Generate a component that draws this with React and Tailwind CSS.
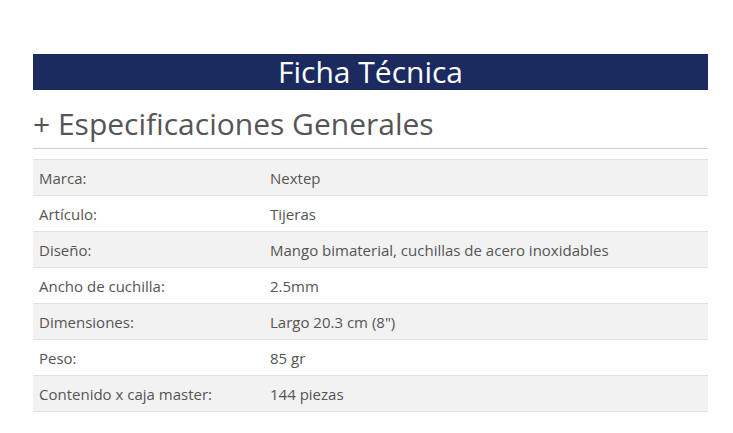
import React from "react";

const rows = [
  ["Marca:", "Nextep"],
  ["Artículo:", "Tijeras"],
  ["Diseño:", "Mango bimaterial, cuchillas de acero inoxidables"],
  ["Ancho de cuchilla:", "2.5mm"],
  ["Dimensiones:", "Largo 20.3 cm (8\")"],
  ["Peso:", "85 gr"],
  ["Contenido x caja master:", "144 piezas"],
];

export default function App() {
  return (
    <div className="w-[733px] h-[433px] bg-white pt-[54px] pl-[33px]" style={{ fontFamily: '"Open Sans", sans-serif' }}>
      <div className="w-[675px]">
        <div className="h-[36px] bg-[#1b2a5f] flex items-center justify-center text-white text-[30px] leading-none">
          Ficha Técnica
        </div>
        <div className="mt-[17px] h-[42px] text-[30px] leading-[34px] text-[#555] border-b border-[#cfcfcf]">
          + Especificaciones Generales
        </div>
        <div className="mt-[10px] border-t border-[#e0e0e0]">
          {rows.map(([k, v], i) => (
            <div
              key={i}
              className={
                "flex h-[36px] pt-[2px] items-center text-[15px] text-[#555] border-b border-[#e0e0e0] " +
                (i % 2 === 0 ? "bg-[#f2f2f2]" : "bg-white")
              }
            >
              <div className="w-[237px] pl-[6px]">{k}</div>
              <div>{v}</div>
            </div>
          ))}
        </div>
      </div>
    </div>
  );
}
